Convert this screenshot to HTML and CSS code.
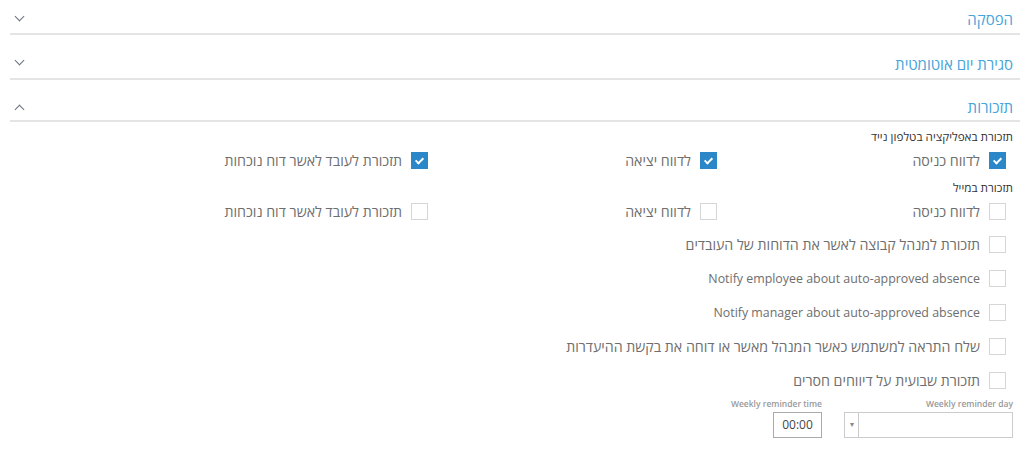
FILE: index.html
```html
<!DOCTYPE html>
<html lang="he" dir="rtl">
<head>
    <meta charset="UTF-8">
    <title>הגדרות</title>
    <link rel="stylesheet" href="styles.css">
</head>
<body>
    <div class="settings">
        <div class="section-head">
            <span class="section-title">הפסקה</span>
            <span class="chevron down"></span>
        </div>
        <div class="section-head">
            <span class="section-title">סגירת יום אוטומטית</span>
            <span class="chevron down"></span>
        </div>
        <div class="section-head">
            <span class="section-title">תזכורות</span>
            <span class="chevron up"></span>
        </div>

        <div class="section-body">
            <div class="group-title">תזכורת באפליקציה בטלפון נייד</div>
            <div class="grid-row">
                <label class="check"><span class="box checked"></span>לדווח כניסה</label>
                <label class="check"><span class="box checked"></span>לדווח יציאה</label>
                <label class="check"><span class="box checked"></span>תזכורת לעובד לאשר דוח נוכחות</label>
            </div>

            <div class="group-title mail">תזכורת במייל</div>
            <div class="grid-row">
                <label class="check"><span class="box"></span>לדווח כניסה</label>
                <label class="check"><span class="box"></span>לדווח יציאה</label>
                <label class="check"><span class="box"></span>תזכורת לעובד לאשר דוח נוכחות</label>
            </div>

            <div class="list">
                <label class="check"><span class="box"></span>תזכורת למנהל קבוצה לאשר את הדוחות של העובדים</label>
                <label class="check en"><span class="box"></span>Notify employee about auto-approved absence</label>
                <label class="check en"><span class="box"></span>Notify manager about auto-approved absence</label>
                <label class="check"><span class="box"></span>שלח התראה למשתמש כאשר המנהל מאשר או דוחה את בקשת ההיעדרות</label>
                <label class="check"><span class="box"></span>תזכורת שבועית על דיווחים חסרים</label>
            </div>

            <div class="fields">
                <div class="field">
                    <div class="field-label">Weekly reminder day</div>
                    <div class="select">
                        <span class="select-value"></span>
                        <span class="select-arrow">&#9662;</span>
                    </div>
                </div>
                <div class="field">
                    <div class="field-label">Weekly reminder time</div>
                    <div class="time-input">00:00</div>
                </div>
            </div>
        </div>
    </div>
</body>
</html>
```

FILE: styles.css
```css
body {
    margin: 0;
    background-color: white;
    font-family: "Open Sans", "Liberation Sans", sans-serif;
    color: #555;
    overflow: hidden;
}
.settings {
    margin: -9px 4px 0 10px;
}
.section-head {
    display: flex;
    align-items: center;
    justify-content: space-between;
    height: 42px;
    padding: 0 7px 0 6px;
    border-bottom: 2px solid #e4e4e4;
    box-sizing: content-box;
}
.section-head:nth-child(2) {
    height: 43px;
}
.section-head:nth-child(3) {
    height: 40px;
}
.section-title {
    padding-top: 14px;
    font-size: 15px;
    color: #45a5db;
}
.chevron {
    width: 6px;
    height: 6px;
    margin-top: 14px;
    border-right: 1.5px solid #6a7080;
    border-bottom: 1.5px solid #6a7080;
}
.chevron.down {
    transform: rotate(45deg);
    margin-top: 8px;
}
.chevron.up {
    transform: rotate(-135deg);
    margin-top: 18px;
}
.section-body {
    padding: 6px 14px 0 0;
}
.group-title {
    font-size: 11.7px;
    color: #333;
    margin-right: -7px;
    line-height: 16px;
}
.group-title.mail {
    margin-top: 4px;
}
.grid-row {
    display: grid;
    grid-template-columns: 289px 289px 289px;
    height: 30px;
    align-items: center;
    margin-top: 1px;
}
.check {
    display: flex;
    align-items: center;
    gap: 9px;
    font-size: 14.2px;
    color: #6e6e6e;
    white-space: nowrap;
}
.check.en {
    font-size: 12.4px;
}
.box {
    width: 15px;
    height: 15px;
    border: 1px solid #d6d6d6;
    background: white;
    flex-shrink: 0;
    position: relative;
}
.box.checked {
    background: #2b87c8;
    border-color: #2b87c8;
}
.box.checked::after {
    content: "";
    position: absolute;
    left: 5px;
    top: 3px;
    width: 3px;
    height: 6px;
    border-right: 2px solid white;
    border-bottom: 2px solid white;
    transform: rotate(45deg);
}
.list {
    display: flex;
    flex-direction: column;
    align-items: flex-start;
    margin-top: 1px;
}
.list .check {
    height: 34px;
}
.fields {
    display: flex;
    gap: 22px;
    margin-right: -7px;
    margin-top: 1px;
}
.field {
    display: flex;
    flex-direction: column;
    align-items: flex-start;
}
.field:first-child {
    align-items: stretch;
}
.field-label {
    font-size: 8.5px;
    font-weight: 600;
    color: #999;
    height: 14px;
    text-align: right;
}
.select {
    display: flex;
    width: 167px;
    height: 24px;
    border: 1px solid #ccc;
}
.select-value {
    flex: 1;
}
.select-arrow {
    width: 13px;
    border-right: 1px solid #ccc;
    font-size: 8px;
    color: #888;
    text-align: center;
    line-height: 22px;
}
.time-input {
    width: 47px;
    height: 24px;
    border: 1px solid #aaa;
    font-size: 12px;
    line-height: 24px;
    text-align: center;
    color: #444;
}
```
